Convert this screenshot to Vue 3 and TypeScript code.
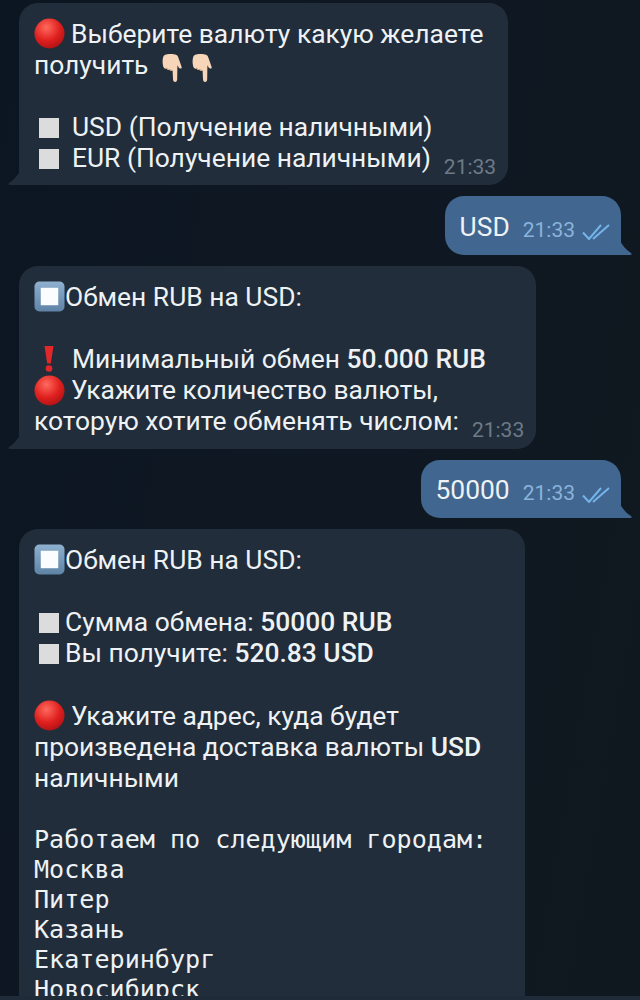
<template>
  <div class="screen">
    <svg class="defs" width="0" height="0" aria-hidden="true">
      <defs>
        <radialGradient id="redBall" cx="0.4" cy="0.3" r="0.8">
          <stop offset="0" stop-color="#ff6a5e" />
          <stop offset="0.55" stop-color="#e0201f" />
          <stop offset="1" stop-color="#a50f12" />
        </radialGradient>
        <linearGradient id="blueBox" x1="0" y1="0" x2="0" y2="1">
          <stop offset="0" stop-color="#8fb0cf" />
          <stop offset="1" stop-color="#5f83a6" />
        </linearGradient>
        <symbol id="red" viewBox="0 0 32 32">
          <circle cx="16" cy="16" r="15.5" fill="url(#redBall)" />
        </symbol>
        <symbol id="box" viewBox="0 0 32 32">
          <rect x="0.5" y="0.5" width="31" height="31" rx="5" fill="url(#blueBox)" />
          <rect x="7" y="7" width="18" height="18" fill="#fbfcfd" />
        </symbol>
        <symbol id="bang" viewBox="0 0 10 26">
          <path d="M0.5 0h9L6.8 17.5H3.2z" fill="#e0272a" />
          <circle cx="5" cy="22.5" r="3.3" fill="#e0272a" />
        </symbol>
        <symbol id="hand" viewBox="0 0 24 32">
          <path
            d="M3 2.500C6 .8 12 .6 15.500 2c1 .4 1.600 1.600 1.900 2.800l3.100 8.600c.5 1.300.1 2-.8 2.100-1 .1-1.700-.5-2.300-1.500l-1-1.800-.2 13.800c0 1.700-.8 3-2.100 3s-2-1.200-2.100-3l-.4-8.500c-1.200.5-2.400.3-3.100-.6-1.200.3-2.300-.1-2.900-1.100-1.300.1-2.500-.6-3.200-1.900C1.300 10.600 1.200 5 3 2.500z"
            fill="#f6d5b8"
          />
          <path d="M5 15l2.500 1.400M8 16.400l2.400.8" stroke="#c99c7c" stroke-width="1" fill="none" />
        </symbol>
        <symbol id="ticks" viewBox="0 0 28 16">
          <path d="M1 8.500l6 6.500L19 1M11 15L27 1" stroke="#74b4ea" stroke-width="2" fill="none" />
        </symbol>
      </defs>
    </svg>

    <div class="chat">
      <div class="bubble in first">
        <svg class="tail" viewBox="0 0 12 14"><path d="M12 0v14H2C0 14 0 13 1 12 6 9 9 5 12 0z" /></svg>
        <div class="line">
          <svg class="em"><use href="#red" /></svg>
          <span class="after-em">Выберите валюту какую желаете</span>
        </div>
        <div class="line">
          <span>получить</span>
          <svg class="hand first-hand"><use href="#hand" /></svg>
          <svg class="hand"><use href="#hand" /></svg>
        </div>
        <div class="line"></div>
        <div class="line">
          <i class="sq wide"></i>
          <span>USD (Получение наличными)</span>
        </div>
        <div class="line last">
          <div class="line-start">
            <i class="sq wide"></i>
            <span>EUR (Получение наличными)</span>
          </div>
          <time>21:33</time>
        </div>
      </div>

      <div class="bubble out">
        <svg class="tail" viewBox="0 0 12 14"><path d="M0 0v14h10c2 0 2-1 1-2C6 9 3 5 0 0z" /></svg>
        <div class="line last">
          <span>USD</span>
          <div class="meta">
            <time>21:33</time>
            <svg class="ticks"><use href="#ticks" /></svg>
          </div>
        </div>
      </div>

      <div class="bubble in">
        <svg class="tail" viewBox="0 0 12 14"><path d="M12 0v14H2C0 14 0 13 1 12 6 9 9 5 12 0z" /></svg>
        <div class="line">
          <svg class="em"><use href="#box" /></svg>
          <span>Обмен RUB на USD:</span>
        </div>
        <div class="line"></div>
        <div class="line">
          <svg class="bang"><use href="#bang" /></svg>
          <span class="after-bang">Минимальный обмен <b>50.000 RUB</b></span>
        </div>
        <div class="line">
          <svg class="em"><use href="#red" /></svg>
          <span class="after-em">Укажите количество валюты,</span>
        </div>
        <div class="line last">
          <span>которую хотите обменять числом:</span>
          <time>21:33</time>
        </div>
      </div>

      <div class="bubble out">
        <svg class="tail" viewBox="0 0 12 14"><path d="M0 0v14h10c2 0 2-1 1-2C6 9 3 5 0 0z" /></svg>
        <div class="line last">
          <span>50000</span>
          <div class="meta">
            <time>21:33</time>
            <svg class="ticks"><use href="#ticks" /></svg>
          </div>
        </div>
      </div>

      <div class="bubble in long">
        <div class="line">
          <svg class="em"><use href="#box" /></svg>
          <span>Обмен RUB на USD:</span>
        </div>
        <div class="line"></div>
        <div class="line">
          <i class="sq"></i>
          <span>Сумма обмена: <b>50000 RUB</b></span>
        </div>
        <div class="line">
          <i class="sq"></i>
          <span>Вы получите: <b>520.83 USD</b></span>
        </div>
        <div class="line"></div>
        <div class="line">
          <svg class="em"><use href="#red" /></svg>
          <span class="after-em">Укажите адрес, куда будет</span>
        </div>
        <div class="line"><span>произведена доставка валюты <b>USD</b></span></div>
        <div class="line"><span>наличными</span></div>
        <div class="line"></div>
        <pre class="mono">Работаем по следующим городам:
Москва
Питер
Казань
Екатеринбург
Новосибирск</pre>
      </div>
    </div>
    <div class="strip"></div>
  </div>
</template>

<script setup lang="ts">
</script>

<style>
html,
body {
  background: #0e1621;
}
</style>

<style scoped>
.screen {
  height: 1000px;
  display: flex;
  flex-direction: column;
  overflow: hidden;
}

.chat {
  flex: 1;
  min-height: 0;
  overflow: hidden;
  display: flex;
  flex-direction: column;
  gap: 11px;
  padding: 3px 19px 0;
  background: linear-gradient(100deg, #0c1622 0%, #0f1822 60%, #10181f 100%);
  font-family: Roboto, "Noto Sans", sans-serif;
  font-size: 26.4px;
  color: #eef2f5;
}

.strip {
  flex: none;
  height: 4px;
  background: #1f2b38;
}

.defs {
  position: absolute;
}

.bubble {
  position: relative;
  flex: none;
  border-radius: 19px;
  padding: 15px 12px 11.5px 15px;
  background: #212d3a;
}

.bubble.in {
  align-self: flex-start;
  border-bottom-left-radius: 0;
}

.bubble.out {
  align-self: flex-end;
  border-bottom-right-radius: 0;
  background: #41668f;
  padding: 15px 11px 12.5px 15px;
}

.long {
  width: 506px;
  box-sizing: border-box;
}

.tail {
  position: absolute;
  bottom: 0;
  width: 12px;
  height: 14px;
}

.in .tail {
  left: -11px;
  fill: #212d3a;
}

.out .tail {
  right: -11px;
  fill: #41668f;
}

.line {
  display: flex;
  align-items: center;
  height: 31.2px;
  white-space: nowrap;
}

.line.last {
  justify-content: space-between;
  gap: 13px;
}

.line-start {
  display: flex;
  align-items: center;
}

.em {
  width: 31px;
  height: 31px;
  flex: none;
}

.after-em {
  margin-left: 6px;
}

.sq {
  flex: none;
  width: 20px;
  height: 20px;
  margin: 2px 6px 0 5px;
  background: #dcdcdc;
}

.sq.wide {
  margin-right: 13px;
}

.bang {
  flex: none;
  width: 10px;
  height: 26px;
  margin-left: 10px;
}

.after-bang {
  margin-left: 18px;
}

.hand {
  flex: none;
  width: 24px;
  height: 32px;
  margin: 8px 6px 0 0;
}

.first-hand {
  margin-left: 13px;
}

b {
  font-weight: 500;
}

time {
  flex: none;
  align-self: flex-end;
  font-size: 21px;
  line-height: 22px;
  margin-bottom: -4px;
  color: #6d7a87;
}

.meta {
  display: flex;
  align-items: flex-end;
  gap: 7px;
}

.out time {
  color: #8ab4dc;
  margin-bottom: -5px;
}

.ticks {
  width: 28px;
  height: 16px;
  margin-bottom: -4px;
}

.mono {
  margin: 0;
  font-family: "DejaVu Sans Mono", monospace;
  font-size: 25.1px;
  line-height: 30px;
}
</style>
